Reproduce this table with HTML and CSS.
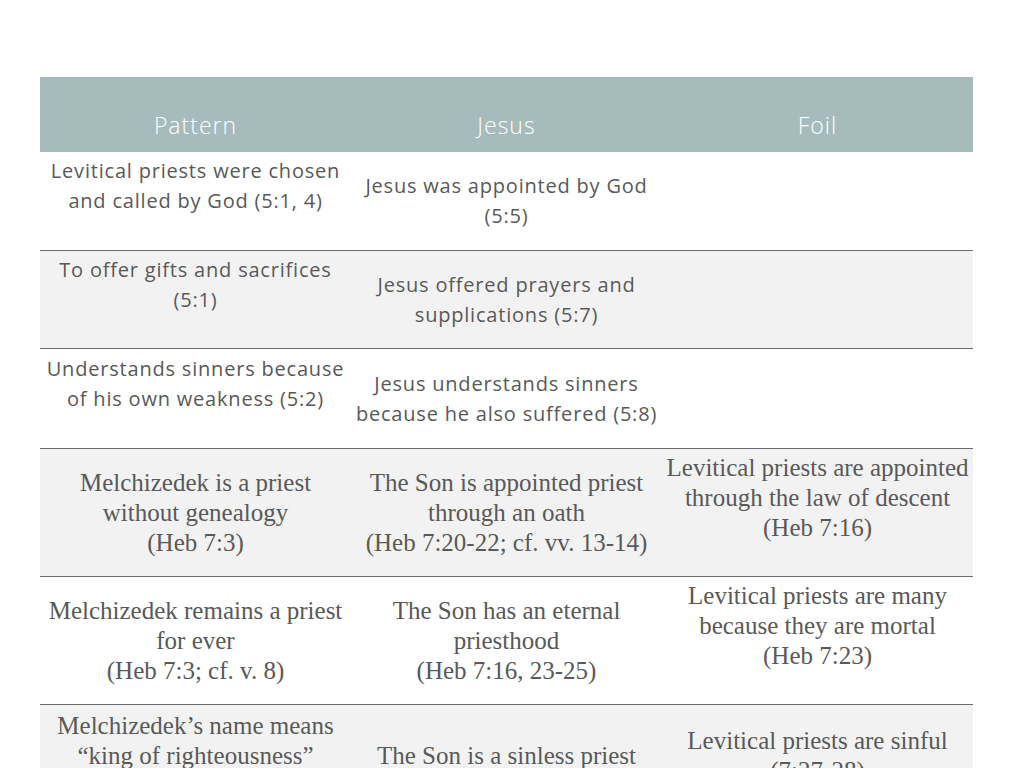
FILE: index.html
```html
<!DOCTYPE html>
<html lang="en">
<head>
<meta charset="utf-8">
<title>Priesthood comparison</title>
<link rel="stylesheet" href="styles.css">
</head>
<body>
<table class="grid">
  <thead>
    <tr class="head">
      <th>Pattern</th>
      <th>Jesus</th>
      <th>Foil</th>
    </tr>
  </thead>
  <tbody>
    <tr class="r-first">
      <td class="sans">Levitical priests were chosen<br>and called by God (5:1, 4)<span class="blank">&nbsp;</span></td>
      <td class="sans">Jesus was appointed by God<br>(5:5)</td>
      <td class="sans"></td>
    </tr>
    <tr class="r-sm alt">
      <td class="sans">To offer gifts and sacrifices<br>(5:1)<span class="blank">&nbsp;</span></td>
      <td class="sans">Jesus offered prayers and<br>supplications (5:7)</td>
      <td class="sans"></td>
    </tr>
    <tr class="r-md">
      <td class="sans">Understands sinners because<br>of his own weakness (5:2)<span class="blank">&nbsp;</span></td>
      <td class="sans">Jesus understands sinners<br>because he also suffered (5:8)</td>
      <td class="sans"></td>
    </tr>
    <tr class="r-lg alt">
      <td class="serif">Melchizedek is a priest<br>without genealogy<br>(Heb 7:3)</td>
      <td class="serif">The Son is appointed priest<br>through an oath<br>(Heb 7:20-22; cf. vv. 13-14)</td>
      <td class="serif">Levitical priests are appointed<br>through the law of descent<br>(Heb 7:16)<span class="blank">&nbsp;</span></td>
    </tr>
    <tr class="r-lg">
      <td class="serif">Melchizedek remains a priest<br>for ever<br>(Heb 7:3; cf. v. 8)</td>
      <td class="serif">The Son has an eternal<br>priesthood<br>(Heb 7:16, 23-25)</td>
      <td class="serif">Levitical priests are many<br>because they are mortal<br>(Heb 7:23)<span class="blank">&nbsp;</span></td>
    </tr>
    <tr class="r-xl alt">
      <td class="serif">Melchizedek’s name means<br>“king of righteousness”<br>(Heb 7:2)<span class="blank">&nbsp;</span></td>
      <td class="serif">The Son is a sinless priest<br>(Heb 7:26)</td>
      <td class="serif">Levitical priests are sinful<br>(7:27-28)<span class="blank">&nbsp;</span></td>
    </tr>
  </tbody>
</table>
</body>
</html>
```

FILE: styles.css
```css
html, body {
  margin: 0;
  padding: 0;
  background: #ffffff;
}

body {
  padding-top: 77px;
  padding-left: 40px;
}

.grid {
  width: 933px;
  border-collapse: collapse;
  table-layout: fixed;
  color: #595959;
}

.grid th,
.grid td {
  padding: 0 2px;
  text-align: center;
  vertical-align: middle;
  white-space: nowrap;
}

.head th {
  height: 75px;
  background: #a6bbbc;
  color: #ffffff;
  font-family: "Open Sans", "DejaVu Sans", sans-serif;
  font-weight: 300;
  font-size: 23px;
  letter-spacing: 1px;
  line-height: 30px;
  vertical-align: bottom;
  padding-bottom: 12px;
  box-sizing: border-box;
}

tbody tr + tr td {
  border-top: 1px solid #6b6b6b;
}

.alt td {
  background: #f2f2f2;
}

.r-first td { height: 98px; }
.r-sm td { height: 97px; }
.r-md td { height: 99px; }
.r-lg td { height: 127px; }
.r-xl td { height: 132px; }

.sans {
  font-family: "Open Sans", "DejaVu Sans", sans-serif;
  font-size: 20px;
  letter-spacing: 0.8px;
  line-height: 30px;
}

.serif {
  font-family: "Liberation Serif", "Times New Roman", serif;
  font-size: 25px;
  line-height: 30px;
}

.blank {
  display: block;
}
```
